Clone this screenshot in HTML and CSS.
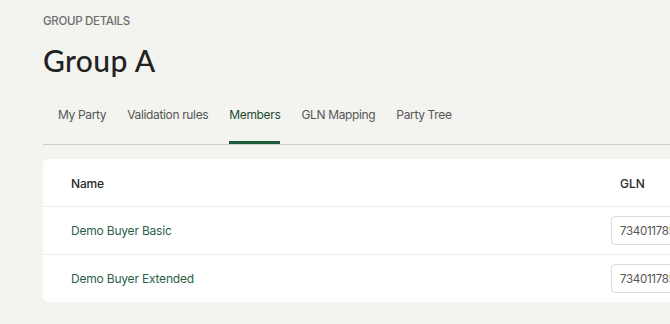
FILE: index.html
```html
<!DOCTYPE html>
<html lang="en">
<head>
    <meta charset="UTF-8">
    <meta name="viewport" content="width=device-width, initial-scale=1.0">
    <title>Group A</title>
    <link rel="stylesheet" href="styles.css">
</head>
<body>
  <div class="page">
    <div class="eyebrow">GROUP DETAILS</div>
    <h1>Group A</h1>

    <div class="tabs">
      <div class="tab">My Party</div>
      <div class="tab">Validation rules</div>
      <div class="tab active">Members</div>
      <div class="tab">GLN Mapping</div>
      <div class="tab">Party Tree</div>
    </div>

    <div class="card">
      <div class="row head">
        <div class="name">Name</div>
        <div class="gln">GLN</div>
      </div>
      <div class="row">
        <div class="name link">Demo Buyer Basic</div>
        <div class="gln"><input class="field" type="text" value="7340117854001"></div>
      </div>
      <div class="row">
        <div class="name link">Demo Buyer Extended</div>
        <div class="gln"><input class="field" type="text" value="7340117854002"></div>
      </div>
    </div>
  </div>
</body>
</html>
```

FILE: styles.css
```css
*{
  margin: 0;
  padding: 0;
  box-sizing: border-box;
}
html, body {
  background-color: #f3f3ef;
  overflow: hidden;
}
body {
  font-family: "Inter", "Liberation Sans", sans-serif;
  color: #222;
}
.page {
  width: 760px;
  padding: 14px 0 0 43px;
}
.eyebrow {
  font-size: 11.5px;
  font-weight: 500;
  color: #6e6e6e;
  letter-spacing: -0.3px;
  line-height: 14px;
}
h1 {
  font-family: "Lato", sans-serif;
  font-size: 30px;
  font-weight: 500;
  color: #222;
  line-height: 36px;
  margin-top: 14px;
  letter-spacing: 0.4px;
}
.tabs {
  display: flex;
  gap: 21px;
  margin-top: 20px;
  padding-left: 15px;
  border-bottom: 1px solid #c9cdd1;
}
.tab {
  font-size: 12px;
  color: #555;
  letter-spacing: -0.35px;
  height: 46px;
  padding-top: 9px;
  border-bottom: 3px solid transparent;
}
.tab.active {
  color: #1f4d36;
  border-bottom-color: #1d5a39;
}
.card {
  margin-top: 14px;
  background: white;
  border-radius: 5px;
}
.row {
  display: flex;
  align-items: center;
  height: 48px;
  border-top: 1px solid #efefea;
  padding-left: 28px;
  font-size: 12px;
}
.row.head {
  border-top: none;
  height: 47px;
}
.name {
  width: 540px;
  letter-spacing: -0.2px;
}
.head .name, .head .gln {
  font-weight: 500;
  color: #2a2a2a;
  padding-top: 2px;
}
.head .gln {
  padding-left: 9px;
}
.link {
  color: #2a5f46;
}
.field {
  width: 120px;
  height: 29px;
  border: 1px solid #dcdcd8;
  border-radius: 4px;
  padding-left: 8px;
  font-family: "Inter", sans-serif;
  font-size: 11.5px;
  color: #555;
  letter-spacing: -0.3px;
}
```
